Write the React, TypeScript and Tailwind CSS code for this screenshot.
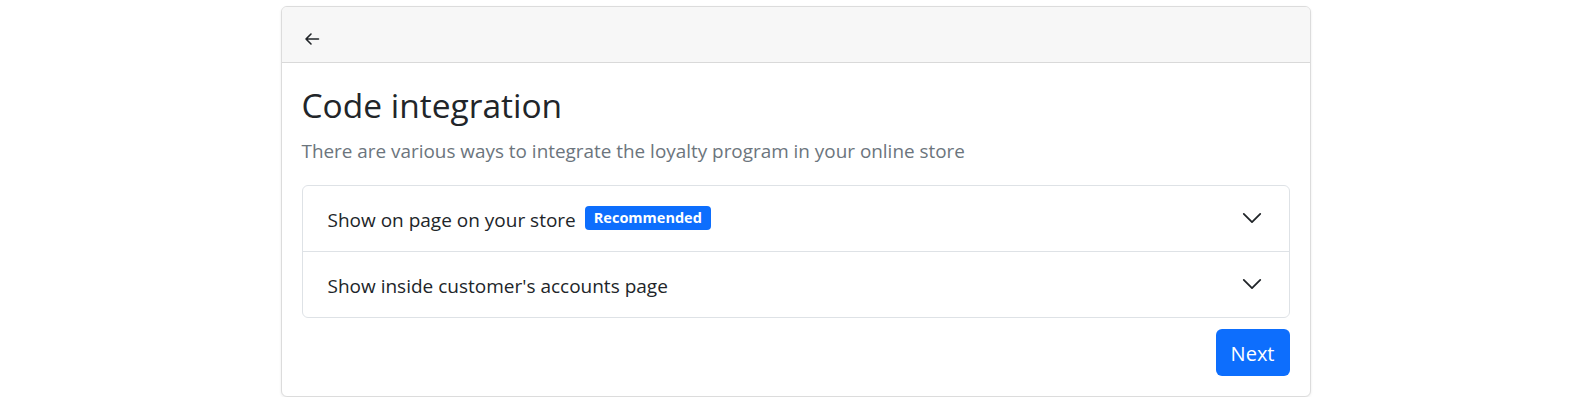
import { useState } from 'react'

const ITEMS = [
  { id: 'page', label: 'Show on page on your store', badge: 'Recommended' },
  { id: 'account', label: "Show inside customer's accounts page", badge: '' },
]

function Chevron() {
  return (
    <svg width="22" height="22" viewBox="0 0 16 16" fill="none" stroke="#212529" strokeWidth="1.3" strokeLinecap="round" strokeLinejoin="round">
      <path d="M2 5L8 11L14 5" />
    </svg>
  )
}

export default function App() {
  const [open, setOpen] = useState<string | null>(null)

  return (
    <div className="bg-white pl-[6px] pt-[6px] text-[#212529]" style={{ fontFamily: '"Open Sans", "Noto Sans", sans-serif' }}>
      <div className="mx-auto w-[1030px] overflow-hidden rounded-[6px] border border-[#dcdcdc] bg-white shadow-[0_1px_3px_rgba(0,0,0,0.08)]">
        {/* header */}
        <div className="flex h-[56px] items-start border-b border-[#d9d9d9] bg-[#f7f7f7] px-[22px] pt-[24px]">
          <button className="flex items-center text-[#212529]">
            <svg width="16" height="16" viewBox="0 0 16 16" fill="none" stroke="currentColor" strokeWidth="1.6" strokeLinecap="round" strokeLinejoin="round">
              <path d="M14.5 8H2M7 3L2 8L7 13" />
            </svg>
          </button>
        </div>

        <div className="px-5 pb-5 pt-[22px]">
          <h2 className="text-[33.5px] leading-[1.2] font-normal">Code integration</h2>
          <p className="mt-[12px] text-[18.9px] leading-[1.5] text-[#6c757d]">
            There are various ways to integrate the loyalty program in your online store
          </p>

          <div className="mt-[19px] rounded-[6px] border border-[#dee2e6]">
            {ITEMS.map((item, i) => (
              <div key={item.id} className={i > 0 ? 'border-t border-[#dee2e6]' : ''}>
                <button
                  onClick={() => setOpen(open === item.id ? null : item.id)}
                  className="flex h-[65px] w-full items-center pl-[25px] pr-[24px] text-left text-[19px]"
                >
                  <span className="pt-[4px]">{item.label}</span>
                  {item.badge && (
                    <span className="ml-[9px] rounded-[4px] bg-[#0d6efd] px-[9px] py-[3px] text-[14.5px] leading-[18px] font-bold text-white">
                      {item.badge}
                    </span>
                  )}
                  <span className="ml-auto mr-[2px] flex">
                    <Chevron />
                  </span>
                </button>
              </div>
            ))}
          </div>

          <div className="mt-[11px] flex justify-end">
            <button className="h-[47px] rounded-[6px] bg-[#0d6efd] px-[15px] pt-[3px] text-[20px] text-white">Next</button>
          </div>
        </div>
      </div>
    </div>
  )
}
